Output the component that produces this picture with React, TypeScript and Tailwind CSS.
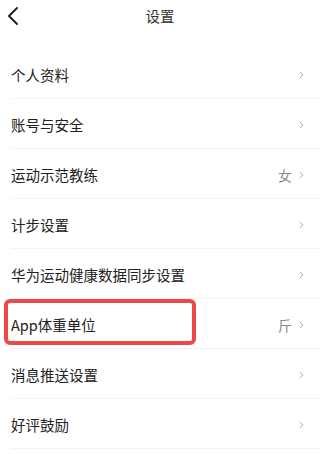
import React from 'react';

type Item = { label: string; value?: string };

const items: Item[] = [
  { label: '个人资料' },
  { label: '账号与安全' },
  { label: '运动示范教练', value: '女' },
  { label: '计步设置' },
  { label: '华为运动健康数据同步设置' },
  { label: 'App体重单位', value: '斤' },
  { label: '消息推送设置' },
  { label: '好评鼓励' },
];

const Chevron = () => (
  <svg width="5" height="8" viewBox="0 0 5 8" fill="none" className="ml-[7px]">
    <path d="M1 1l3 3-3 3" stroke="#b4b4b4" strokeWidth="1" strokeLinecap="round" strokeLinejoin="round" />
  </svg>
);

const App: React.FC = () => {
  return (
    <div
      className="relative w-[320px] h-[454px] overflow-hidden bg-white text-[#222]"
      style={{ fontFamily: '"Noto Sans CJK SC", "Noto Sans", sans-serif' }}
    >
      <header className="relative h-[32px] flex items-center justify-center">
        <button className="absolute left-[6px] top-[6px] p-0">
          <svg width="13" height="20" viewBox="0 0 13 20" fill="none">
            <path d="M11 2L3 10l8 8" stroke="#222" strokeWidth="2" strokeLinecap="round" strokeLinejoin="round" />
          </svg>
        </button>
        <h1 className="text-[14.5px] leading-none text-[#333]">设置</h1>
      </header>

      <ul className="mt-[17px]">
        {items.map((item) => (
          <li
            key={item.label}
            className="ml-[11px] h-[50px] flex items-center justify-between pt-[3px] pr-[16px] border-b border-[#f3f3f3]"
          >
            <span className="text-[14.5px] leading-none">{item.label}</span>
            <span className="flex items-center">
              {item.value && <span className="text-[14px] leading-none text-[#8a8a8a]">{item.value}</span>}
              <Chevron />
            </span>
          </li>
        ))}
      </ul>

      {/* highlight annotation */}
      <div className="absolute left-[4px] top-[299px] w-[192px] h-[46px] border-4 border-[#f04848] rounded-[6px] pointer-events-none" />
    </div>
  );
};

export default App;
